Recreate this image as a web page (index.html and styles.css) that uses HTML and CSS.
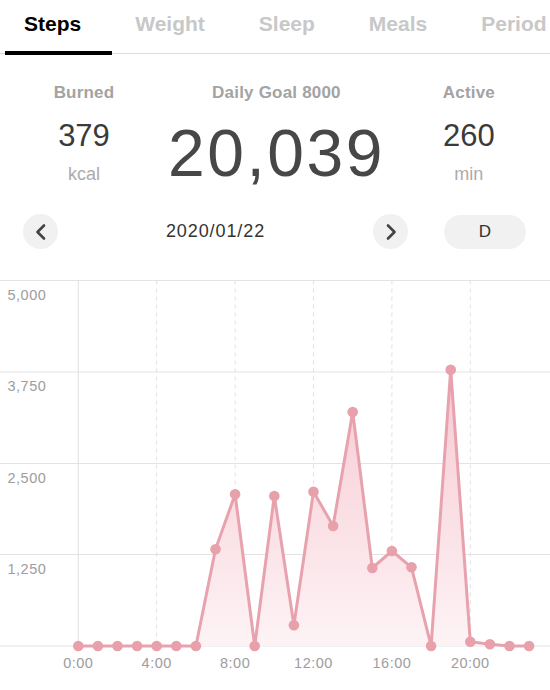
FILE: index.html
```html
<!DOCTYPE html>
<html>
<head>
    <title>Steps</title>
    <meta http-equiv="Content-Type" content="text/html;charset=utf-8"/>
    <link rel="stylesheet" href="styles.css">
</head>
<body>
<div class="tabs">
    <div class="tab active">Steps</div>
    <div class="tab">Weight</div>
    <div class="tab">Sleep</div>
    <div class="tab">Meals</div>
    <div class="tab">Period</div>
</div>

<div class="stats">
    <div class="stat">
        <div class="stat-label">Burned</div>
        <div class="stat-value">379</div>
        <div class="stat-unit">kcal</div>
    </div>
    <div class="stat">
        <div class="stat-label">Daily Goal 8000</div>
        <div class="stat-total">20,039</div>
    </div>
    <div class="stat">
        <div class="stat-label">Active</div>
        <div class="stat-value">260</div>
        <div class="stat-unit">min</div>
    </div>
</div>

<div class="datebar">
    <button class="navbtn">
        <svg width="12" height="16" viewBox="0 0 12 16"><path d="M9 1.5 L2.5 8 L9 14.5"/></svg>
    </button>
    <div class="date">2020/01/22</div>
    <button class="navbtn">
        <svg width="12" height="16" viewBox="0 0 12 16"><path d="M3 1.5 L9.5 8 L3 14.5"/></svg>
    </button>
    <button class="rangebtn">D</button>
</div>

<svg class="chart" width="550" height="411" viewBox="0 0 550 411">
    <defs>
        <linearGradient id="fillgrad" gradientUnits="userSpaceOnUse" x1="0" y1="85" x2="0" y2="366">
            <stop offset="0" stop-color="#f6c9d2"/>
            <stop offset="1" stop-color="#fdf3f5"/>
        </linearGradient>
    </defs>

    <!-- grid -->
    <g class="grid-h">
        <line x1="0" y1="0.5" x2="550" y2="0.5"/>
        <line x1="0" y1="92" x2="550" y2="92"/>
        <line x1="0" y1="183.5" x2="550" y2="183.5"/>
        <line x1="0" y1="274.5" x2="550" y2="274.5"/>
        <line x1="0" y1="366" x2="550" y2="366"/>
    </g>
    <line class="grid-axis" x1="78.3" y1="0.5" x2="78.3" y2="366"/>
    <g class="grid-v">
        <line x1="156.7" y1="0.5" x2="156.7" y2="366"/>
        <line x1="235.1" y1="0.5" x2="235.1" y2="366"/>
        <line x1="313.5" y1="0.5" x2="313.5" y2="366"/>
        <line x1="391.9" y1="0.5" x2="391.9" y2="366"/>
        <line x1="470.3" y1="0.5" x2="470.3" y2="366"/>
    </g>

    <g class="ylabels">
        <text x="7.5" y="19.5">5,000</text>
        <text x="7.5" y="111">3,750</text>
        <text x="7.5" y="202.5">2,500</text>
        <text x="7.5" y="293.5">1,250</text>
    </g>
    <g class="xlabels">
        <text x="78.3" y="388">0:00</text>
        <text x="156.7" y="388">4:00</text>
        <text x="235.1" y="388">8:00</text>
        <text x="313.5" y="388">12:00</text>
        <text x="391.9" y="388">16:00</text>
        <text x="470.3" y="388">20:00</text>
    </g>

    <!-- hourly steps -->
    <polygon class="area" points="78.3,366 97.9,366 117.5,366 137.1,366 156.7,366 176.3,366 195.9,366 215.5,269.3 235.1,214.3 254.7,366 274.3,216 293.9,345.3 313.5,211.7 333.1,246 352.7,132 372.3,288 391.9,271 411.5,287.3 431.1,366 450.7,89.7 470.3,361.7 489.9,364.3 509.5,366 529.1,366"/>
    <polyline class="line" points="78.3,366 97.9,366 117.5,366 137.1,366 156.7,366 176.3,366 195.9,366 215.5,269.3 235.1,214.3 254.7,366 274.3,216 293.9,345.3 313.5,211.7 333.1,246 352.7,132 372.3,288 391.9,271 411.5,287.3 431.1,366 450.7,89.7 470.3,361.7 489.9,364.3 509.5,366 529.1,366"/>
    <g class="dots">
        <circle cx="78.3" cy="366" r="5.3"/>
        <circle cx="97.9" cy="366" r="5.3"/>
        <circle cx="117.5" cy="366" r="5.3"/>
        <circle cx="137.1" cy="366" r="5.3"/>
        <circle cx="156.7" cy="366" r="5.3"/>
        <circle cx="176.3" cy="366" r="5.3"/>
        <circle cx="195.9" cy="366" r="5.3"/>
        <circle cx="215.5" cy="269.3" r="5.3"/>
        <circle cx="235.1" cy="214.3" r="5.3"/>
        <circle cx="254.7" cy="366" r="5.3"/>
        <circle cx="274.3" cy="216" r="5.3"/>
        <circle cx="293.9" cy="345.3" r="5.3"/>
        <circle cx="313.5" cy="211.7" r="5.3"/>
        <circle cx="333.1" cy="246" r="5.3"/>
        <circle cx="352.7" cy="132" r="5.3"/>
        <circle cx="372.3" cy="288" r="5.3"/>
        <circle cx="391.9" cy="271" r="5.3"/>
        <circle cx="411.5" cy="287.3" r="5.3"/>
        <circle cx="431.1" cy="366" r="5.3"/>
        <circle cx="450.7" cy="89.7" r="5.3"/>
        <circle cx="470.3" cy="361.7" r="5.3"/>
        <circle cx="489.9" cy="364.3" r="5.3"/>
        <circle cx="509.5" cy="366" r="5.3"/>
        <circle cx="529.1" cy="366" r="5.3"/>
    </g>
</svg>
</body>
</html>
```

FILE: styles.css
```css
body {
    margin: 0;
    font-family: "Liberation Sans", Arial, Helvetica, sans-serif;
    color: #333;
    background-color: #fff;
    overflow: hidden;
}

.tabs {
    display: flex;
    padding-left: 5px;
    overflow: hidden;
    white-space: nowrap;
    background: linear-gradient(#dcdcdc, #dcdcdc) 0 53px / 100% 1px no-repeat;
}
.tab {
    flex-shrink: 0;
    padding: 0 27px 4px;
    border-bottom: 4px solid transparent;
    font-size: 21px;
    font-weight: 700;
    line-height: 47px;
    color: #c8c8c8;
}
.tab.active {
    padding-left: 19px;
    padding-right: 31px;
    margin-right: -4px;
    border-bottom-color: #000;
    color: #000;
}

.stats {
    display: grid;
    grid-template-columns: 168px 1fr 168px;
    align-items: start;
    padding-top: 28px;
    text-align: center;
}
.stat-label {
    font-size: 17px;
    font-weight: 700;
    line-height: 20px;
    letter-spacing: 0.2px;
    color: #a3a3a3;
}
.stat-value {
    margin-top: 15px;
    font-size: 31px;
    line-height: 36px;
    color: #3a3a3a;
}
.stat-unit {
    margin-top: 9px;
    font-size: 18px;
    line-height: 22px;
    color: #ababab;
}
.stat-total {
    margin-top: 14px;
    font-size: 66px;
    line-height: 72px;
    letter-spacing: 2.5px;
    color: #474747;
}

.datebar {
    display: flex;
    align-items: center;
    margin-top: 25px;
    padding: 0 24px 0 23px;
}
.navbtn,
.rangebtn {
    border: 0;
    padding: 0;
    margin: 0;
    font-family: inherit;
    background-color: #f1f1f1;
    color: #333;
}
.navbtn {
    display: flex;
    align-items: center;
    justify-content: center;
    width: 35px;
    height: 35px;
    border-radius: 50%;
}
.navbtn svg path {
    fill: none;
    stroke: #444;
    stroke-width: 2.6;
    stroke-linecap: round;
    stroke-linejoin: round;
}
.date {
    flex: 1;
    text-align: center;
    font-size: 18px;
    letter-spacing: 0.9px;
    color: #333;
}
.rangebtn {
    width: 82px;
    height: 34px;
    margin-left: 36px;
    border-radius: 17px;
    font-size: 17px;
}

.chart {
    display: block;
    margin-top: 31px;
}
.grid-h line {
    stroke: #e3e3e3;
    stroke-width: 1;
}
.grid-axis {
    stroke: #e0e0e0;
    stroke-width: 1;
}
.grid-v line {
    stroke: #e0e0e0;
    stroke-width: 1;
    stroke-dasharray: 4 4;
}
.ylabels text,
.xlabels text {
    font-family: "Liberation Sans", Arial, sans-serif;
    font-size: 14.5px;
    letter-spacing: 0.5px;
    fill: #9d9d9d;
}
.xlabels text {
    text-anchor: middle;
}
.area {
    fill: url(#fillgrad);
    stroke: none;
}
.line {
    fill: none;
    stroke: #e8a2ad;
    stroke-width: 3;
}
.dots circle {
    fill: #e8a0ab;
}
```
